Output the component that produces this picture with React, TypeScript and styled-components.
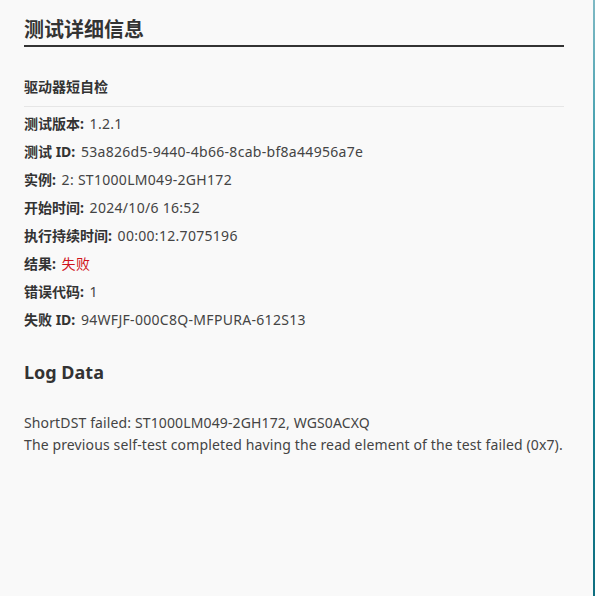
import React from "react";
import styled, { createGlobalStyle } from "styled-components";

const GlobalStyle = createGlobalStyle`
  html, body {
    margin: 0;
    padding: 0;
    height: 100%;
  }
  body {
    background: linear-gradient(180deg, #7fb9c4 0%, #1a8fa0 40%, #0f6f80 100%);
    font-family: "Noto Sans", "Noto Sans CJK SC", sans-serif;
  }
`;

const Panel = styled.div`
  width: 593px;
  height: 596px;
  box-sizing: border-box;
  background: #f9f9f9;
  padding: 16px 29px 0 24px;
  color: #333;
`;

const Title = styled.h1`
  margin: 0;
  padding-bottom: 1px;
  font-size: 20px;
  line-height: 28px;
  font-weight: 700;
  color: #333;
  border-bottom: 2px solid #333;
`;

const SubTitle = styled.h2`
  margin: 30px 0 0;
  padding-bottom: 9px;
  font-size: 14px;
  line-height: 20px;
  font-weight: 700;
  color: #333;
  border-bottom: 1px solid #e6e6e6;
`;

const InfoList = styled.div`
  display: flex;
  flex-direction: column;
  margin-top: 3px;
`;

const InfoRow = styled.div`
  font-size: 14px;
  line-height: 28px;
  color: #444;
  white-space: nowrap;
`;

const Label = styled.span`
  font-weight: 700;
  color: #333;
  margin-right: 2px;
`;

const Value = styled.span<{ $danger?: boolean }>`
  letter-spacing: 0.3px;
  color: ${(p) => (p.$danger ? "#d0121b" : "#444")};
`;

const SectionTitle = styled.h2`
  margin: 26px 0 0;
  font-size: 18px;
  line-height: 24px;
  font-weight: 700;
  color: #333;
`;

const LogText = styled.div`
  margin-top: 28px;
  font-size: 14px;
  line-height: 22px;
  letter-spacing: 0.13px;
  white-space: nowrap;
  color: #444;
`;

const info: { label: string; value: string; danger?: boolean }[] = [
  { label: "测试版本", value: "1.2.1" },
  { label: "测试 ID", value: "53a826d5-9440-4b66-8cab-bf8a44956a7e" },
  { label: "实例", value: "2: ST1000LM049-2GH172" },
  { label: "开始时间", value: "2024/10/6 16:52" },
  { label: "执行持续时间", value: "00:00:12.7075196" },
  { label: "结果", value: "失败", danger: true },
  { label: "错误代码", value: "1" },
  { label: "失败 ID", value: "94WFJF-000C8Q-MFPURA-612S13" },
];

export default function App() {
  return (
    <>
      <GlobalStyle />
      <Panel>
        <Title>测试详细信息</Title>
        <SubTitle>驱动器短自检</SubTitle>
        <InfoList>
          {info.map((row) => (
            <InfoRow key={row.label}>
              <Label>{row.label}:</Label> <Value $danger={row.danger}>{row.value}</Value>
            </InfoRow>
          ))}
        </InfoList>
        <SectionTitle>Log Data</SectionTitle>
        <LogText>
          ShortDST failed: ST1000LM049-2GH172, WGS0ACXQ
          <br />
          The previous self-test completed having the read element of the test failed (0x7).
        </LogText>
      </Panel>
    </>
  );
}
